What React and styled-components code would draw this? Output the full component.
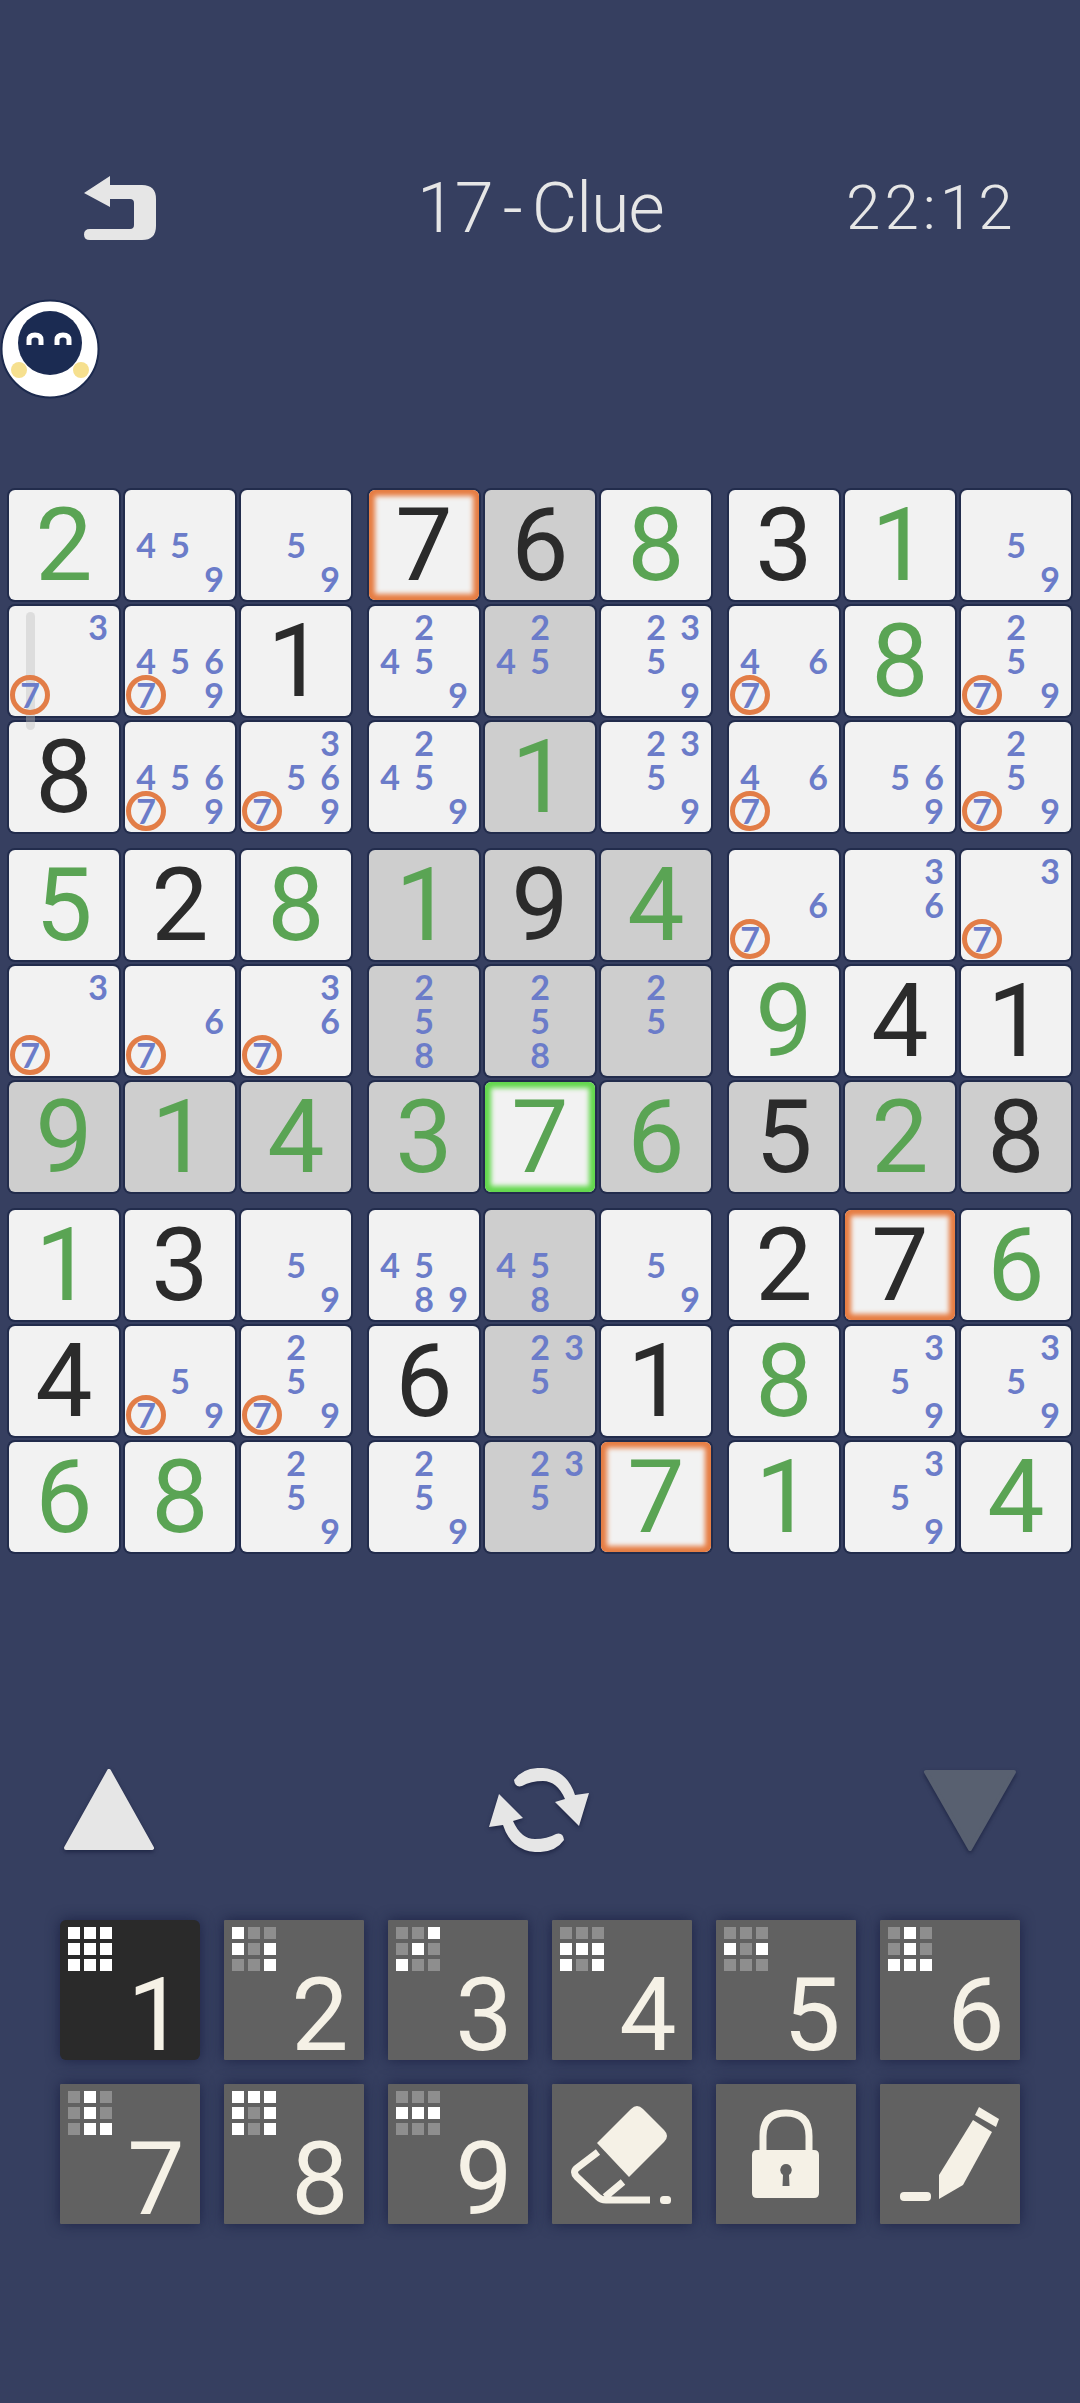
import React from 'react'
import styled, { createGlobalStyle, css } from 'styled-components'

const Global = createGlobalStyle`
    html, body {
        margin: 0;
        padding: 0;
        background-color: #363f60;
    }
`;

const Page = styled.div`
    position: relative;
    width: 1080px;
    height: 2403px;
    overflow: hidden;
    background-color: #363f60;
    font-family: 'Lato', sans-serif;
`;

const Header = styled.div`
    display: grid;
    grid-template-columns: 333px 429px 1fr;
    align-items: center;
    height: 64px;
    padding: 176px 0 0 84px;
    color: #e6e6e6;
    font-family: 'Roboto', sans-serif;
    font-weight: 300;
`;

const BackIcon = styled.svg`
    display: block;
    width: 72px;
    height: 64px;
`;

const Title = styled.div`
    font-size: 70px;
    line-height: 64px;
    letter-spacing: -1px;
    word-spacing: -6px;
    white-space: nowrap;
`;

const Clock = styled.div`
    font-size: 62px;
    line-height: 64px;
    letter-spacing: 4px;
    white-space: nowrap;
`;

const Mascot = styled.svg`
    display: block;
    width: 100px;
    height: 100px;
    margin: 59px 0 91px 0;
`;

const Board = styled.div`
    display: grid;
    grid-template-columns: repeat(3, 342px);
    gap: 18px;
    padding-left: 9px;
`;

const Box = styled.div`
    display: grid;
    grid-template-columns: repeat(3, 110px);
    grid-auto-rows: 110px;
    gap: 6px;
`;

const Cell = styled.div`
    position: relative;
    display: flex;
    align-items: center;
    justify-content: center;
    box-sizing: border-box;
    border-radius: 6px;
    background-color: ${(p) => (p.$shaded ? '#cecece' : '#f2f2f2')};
    box-shadow: 0 0 0 2px #222c4c;
    ${(p) => p.$ring && css`
        box-shadow: 0 0 0 2px #222c4c, inset 0 0 5px 6px ${p.$ring};
    `}
`;

const Value = styled.span`
    font-family: 'Roboto', sans-serif;
    font-size: 102px;
    line-height: 110px;
    font-weight: 400;
    color: ${(p) => (p.$given ? '#2b2b2b' : '#5aa454')};
`;

const Notes = styled.div`
    display: grid;
    grid-template-columns: repeat(3, 34px);
    grid-auto-rows: 34px;
    width: 102px;
    height: 102px;
`;

const Note = styled.span`
    display: flex;
    align-items: center;
    justify-content: center;
    box-sizing: border-box;
    font-size: 34px;
    line-height: 34px;
    font-weight: 700;
    color: #6b7cc9;
    grid-column: ${(p) => ((p.$n - 1) % 3) + 1};
    grid-row: ${(p) => Math.floor((p.$n - 1) / 3) + 1};
`;

const Circled = styled(Note)`
    position: relative;
    z-index: 1;
    &::after {
        content: '';
        position: absolute;
        left: -3px;
        top: -3px;
        width: 40px;
        height: 40px;
        box-sizing: border-box;
        border: 5px solid #e27d47;
        border-radius: 50%;
    }
`;

const ScrollHandle = styled.div`
    position: absolute;
    left: 26px;
    top: 612px;
    width: 9px;
    height: 118px;
    border-radius: 5px;
    background-color: rgba(190, 190, 190, 0.4);
`;

const Arrows = styled.div`
    display: flex;
    justify-content: space-between;
    align-items: center;
    margin-top: 216px;
    padding: 0 62px 0 63px;
`;

const ArrowIcon = styled.svg`
    display: block;
    filter: drop-shadow(0 2px 2px rgba(20, 25, 55, 0.7));
`;

const Keypad = styled.div`
    display: grid;
    grid-template-columns: repeat(6, 140px);
    grid-auto-rows: 140px;
    gap: 24px;
    margin-top: 68px;
    padding-left: 60px;
`;

const Key = styled.div`
    position: relative;
    display: flex;
    align-items: flex-end;
    justify-content: flex-end;
    border-radius: ${(p) => (p.$active ? '6px' : '1px')};
    background-color: ${(p) => (p.$active ? '#2a2a2a' : '#616161')};
    box-shadow: 0 0 14px rgba(20, 25, 60, 0.75);
`;

const KeyDigit = styled.span`
    width: 72px;
    padding: 0 8px 0 0;
    text-align: center;
    font-family: 'Roboto', sans-serif;
    font-size: 102px;
    line-height: 90px;
    font-weight: 400;
    color: #f5f1e6;
`;

const Pattern = styled.div`
    position: absolute;
    left: 8px;
    top: 7px;
    display: grid;
    grid-template-columns: repeat(3, 12px);
    grid-auto-rows: 12px;
    gap: 4px;
`;

const Dot = styled.i`
    display: block;
    background-color: ${(p) => (p.$on ? '#ffffff' : '#8e8e8e')};
`;

const ToolIcon = styled.svg`
    display: block;
    width: 140px;
    height: 140px;
    color: #f5f1e6;
`;

const rows = [
  ['g2', '459', '59', 'k7', 'k6', 'g8', 'k3', 'g1', '59'],
  ['37', '45679', 'k1', '2459', '245', '2359', '467', 'g8', '2579'],
  ['k8', '45679', '35679', '2459', 'g1', '2359', '467', '569', '2579'],
  ['g5', 'k2', 'g8', 'g1', 'k9', 'g4', '67', '36', '37'],
  ['37', '67', '367', '258', '258', '25', 'g9', 'k4', 'k1'],
  ['g9', 'g1', 'g4', 'g3', 'g7', 'g6', 'k5', 'g2', 'k8'],
  ['g1', 'k3', '59', '4589', '458', '59', 'k2', 'k7', 'g6'],
  ['k4', '579', '2579', 'k6', '235', 'k1', 'g8', '359', '359'],
  ['g6', 'g8', '259', '259', '235', 'g7', 'g1', '359', 'g4'],
]

const selected = { r: 5, c: 4 }
const conflicts = ['0-3', '6-7', '8-5']

const isShaded = (r, c) =>
  r === selected.r ||
  c === selected.c ||
  (Math.floor(r / 3) === Math.floor(selected.r / 3) && Math.floor(c / 3) === Math.floor(selected.c / 3))

const patterns = [
  '111111111', '100101001', '001010100',
  '000111101', '000101000', '010010111',
  '010010011', '111101101', '000111000',
]

const SudokuCell = ({ r, c }) => {
  const token = rows[r][c]
  const isSelected = r === selected.r && c === selected.c
  let ring = null
  if (isSelected) ring = '#62d84c'
  else if (conflicts.includes(`${r}-${c}`)) ring = '#e67c42'

  return (
    <Cell $shaded={isShaded(r, c) && !isSelected} $ring={ring}>
      {token[0] === 'g' || token[0] === 'k' ? (
        <Value $given={token[0] === 'k'}>{token[1]}</Value>
      ) : (
        <Notes>
          {token.split('').map((n) =>
            n === '7' ? <Circled key={n} $n={7}>7</Circled> : <Note key={n} $n={Number(n)}>{n}</Note>
          )}
        </Notes>
      )}
    </Cell>
  )
}

const NumberKey = ({ n }) => (
  <Key $active={n === 1}>
    <Pattern>
      {patterns[n - 1].split('').map((on, i) => <Dot key={i} $on={on === '1'} />)}
    </Pattern>
    <KeyDigit>{n}</KeyDigit>
  </Key>
)

const App = () => {
  return (
    <Page>
      <Global />
      <Header>
        <BackIcon viewBox="0 0 72 64">
          <path
            fill="#e6e6e6"
            d="M26 0 L0 17 L26 31 L26 23 L46 23 Q50 23 50 27 L50 49 Q50 53 46 53 L6 53 Q0 53 0 58.5 Q0 64 6 64 L58 64 Q72 64 72 50 L72 23 Q72 9 58 9 L26 9 Z"
          />
        </BackIcon>
        <Title>17 - Clue</Title>
        <Clock>22:12</Clock>
      </Header>

      <Mascot viewBox="0 0 100 100">
        <circle cx="50" cy="50" r="48.5" fill="#ffffff" stroke="#1c2a4e" strokeWidth="2" />
        <circle cx="50" cy="44" r="32" fill="#1b2b52" />
        <circle cx="19" cy="71" r="8" fill="#f6e08f" />
        <circle cx="81" cy="71" r="8" fill="#f6e08f" />
        <path d="M29 46 V41 Q29 36 35 36 Q41 36 41 41 V46" fill="none" stroke="#fff" strokeWidth="5" />
        <path d="M57 46 V41 Q57 36 63 36 Q69 36 69 41 V46" fill="none" stroke="#fff" strokeWidth="5" />
      </Mascot>

      <Board>
        {[0, 1, 2].flatMap((br) =>
          [0, 1, 2].map((bc) => (
            <Box key={`${br}-${bc}`}>
              {[0, 1, 2].flatMap((r) =>
                [0, 1, 2].map((c) => <SudokuCell key={c + r * 3} r={br * 3 + r} c={bc * 3 + c} />)
              )}
            </Box>
          ))
        )}
      </Board>

      <Arrows>
        <ArrowIcon width="92" height="84" viewBox="0 0 92 84">
          <path d="M46 3 L89 80 H3 Z" fill="#e6e6e6" stroke="#e6e6e6" strokeWidth="4" strokeLinejoin="round" />
        </ArrowIcon>
        <ArrowIcon width="100" height="84" viewBox="0 0 100 84">
          <g fill="#e6e6e6">
            <path d="M25 12 Q34 -1 54 0 Q78 2 86 27 L100 25 L90 58 L66 34 L76 31 Q68 13 54 13 Q42 13 33 18 Q26 20 25 12 Z" />
            <path transform="rotate(180 50 42)" d="M25 12 Q34 -1 54 0 Q78 2 86 27 L100 25 L90 58 L66 34 L76 31 Q68 13 54 13 Q42 13 33 18 Q26 20 25 12 Z" />
          </g>
        </ArrowIcon>
        <ArrowIcon width="96" height="84" viewBox="0 0 96 84">
          <path d="M4 4 H92 L48 81 Z" fill="#586070" stroke="#586070" strokeWidth="4" strokeLinejoin="round" />
        </ArrowIcon>
      </Arrows>

      <Keypad>
        {[1, 2, 3, 4, 5, 6, 7, 8, 9].map((n) => <NumberKey key={n} n={n} />)}
        <Key>
          <ToolIcon viewBox="0 0 140 140">
            <path fill="currentColor" d="M79 25 Q85 19 91 25 L112 46 Q118 52 112 58 L77 93 L45 59 Z" />
            <path
              fill="none"
              stroke="currentColor"
              strokeWidth="7"
              d="M46 68 L25 84 Q20 88 25 93 L46 113 Q49 116 54 116 H98 M71 98 L53 113"
            />
            <rect x="108" y="112" width="11" height="8" rx="3.5" fill="currentColor" />
          </ToolIcon>
        </Key>
        <Key>
          <ToolIcon viewBox="0 0 140 140">
            <path fill="none" stroke="currentColor" strokeWidth="7" d="M47 66 V52 Q47 29 70 29 Q93 29 93 52 V66" />
            <path
              fill="currentColor"
              fillRule="evenodd"
              d="M41 66 H98 Q103 66 103 71 V109 Q103 114 98 114 H41 Q36 114 36 109 V71 Q36 66 41 66 Z M70 80 A6 6 0 0 0 67 91 L66.5 102 H73.5 L73 91 A6 6 0 0 0 70 80 Z"
            />
          </ToolIcon>
        </Key>
        <Key>
          <ToolIcon viewBox="0 0 140 140">
            <path fill="currentColor" d="M59 91 L93 36 L112 48 L83 101 L59 115 Z" />
            <path fill="currentColor" d="M99 23 L119 35 L116 43 L95 31 Z" />
            <rect x="20" y="108" width="31" height="9" rx="4" fill="currentColor" />
          </ToolIcon>
        </Key>
      </Keypad>

      <ScrollHandle />
    </Page>
  )
}

export default App
